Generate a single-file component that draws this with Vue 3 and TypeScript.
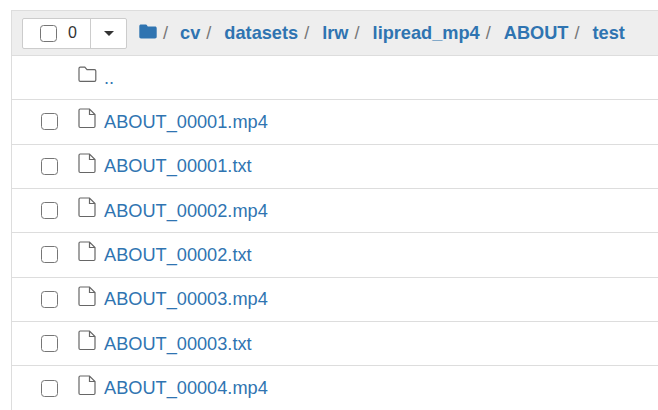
<script setup lang="ts">
const crumbs = ['cv', 'datasets', 'lrw', 'lipread_mp4', 'ABOUT']
const files = [
  'ABOUT_00001.mp4',
  'ABOUT_00001.txt',
  'ABOUT_00002.mp4',
  'ABOUT_00002.txt',
  'ABOUT_00003.mp4',
  'ABOUT_00003.txt',
  'ABOUT_00004.mp4',
]
</script>

<template>
  <div class="page">
    <div class="listing">
      <div class="toolbar">
        <div class="select-group">
          <div class="select-main">
            <span class="check"></span>
            <span class="count">0</span>
          </div>
          <div class="select-caret"><span class="caret"></span></div>
        </div>
        <div class="crumbs">
          <svg class="home" width="18" height="15" viewBox="0 0 18 15">
            <path d="M2 .5h4.500c.8 0 1.200.3 1.600 1L8.800 2.500H16c1 0 1.700.7 1.700 1.700V12.800c0 1-.7 1.700-1.700 1.700H2C1 14.500.3 13.800.3 12.800V2.200C.3 1.200 1 .5 2 .5z" fill="#2f74b1" />
          </svg>
          <span class="sep first">/</span>
          <template v-for="c in crumbs" :key="c">
            <a class="crumb">{{ c }}</a>
            <span class="sep">/</span>
          </template>
          <a class="crumb">test</a>
        </div>
      </div>

      <div class="row">
        <span class="cell-check"></span>
        <svg class="icon" width="19" height="17" viewBox="0 0 19 17" fill="none">
          <path d="M1 14V2.500C1 1.700 1.500 1.200 2.300 1.200h4.500L9 3.700h7.500c.8 0 1.300.5 1.300 1.300v9c0 .8-.5 1.300-1.300 1.300H2.300C1.500 15.300 1 14.800 1 14z" stroke="#666" stroke-width="1.200" />
        </svg>
        <a class="name">..</a>
      </div>
      <div v-for="f in files" :key="f" class="row">
        <span class="cell-check"><span class="check"></span></span>
        <svg class="icon" width="19" height="21" viewBox="0 0 19 21" fill="none">
          <path d="M1 2.200C1 1.500 1.500 1 2.200 1H11.500L17 6.500V18.300C17 19 16.500 19.500 15.800 19.500H2.200C1.500 19.500 1 19 1 18.300zM11.500 1V6.500H17" stroke="#666" stroke-width="1.200" />
        </svg>
        <a class="name">{{ f }}</a>
      </div>
    </div>
  </div>
</template>

<style>
html,
body {
  margin: 0;
  background: #fff;
  overflow: hidden;
}
</style>

<style scoped>
.page {
  height: 410px;
  padding: 10px 0 0 11px;
  box-sizing: border-box;
  overflow: hidden;
  font-family: "Liberation Sans", Arial, sans-serif;
  color: #333;
}

.listing {
  border-top: 1px solid #ddd;
  border-left: 1px solid #ddd;
}

.toolbar {
  display: flex;
  align-items: center;
  height: 44px;
  padding-left: 10px;
  background: #eee;
  border-bottom: 1px solid #ddd;
}

.select-group {
  display: flex;
  height: 31px;
  background: #fff;
  border: 1px solid #ccc;
  border-radius: 2px;
  box-sizing: border-box;
}

.select-main {
  display: flex;
  align-items: center;
  width: 68px;
  padding-left: 17px;
  box-sizing: border-box;
  border-right: 1px solid #ccc;
}

.count {
  margin-left: 11px;
  font-size: 16px;
}

.select-caret {
  display: flex;
  align-items: center;
  justify-content: center;
  width: 35px;
}

.caret {
  border-top: 5.500px solid #333;
  border-left: 5.500px solid transparent;
  border-right: 5.500px solid transparent;
}

.check {
  display: block;
  width: 17px;
  height: 17px;
  box-sizing: border-box;
  border: 1.500px solid #767676;
  border-radius: 3.500px;
  background: #fff;
}

.crumbs {
  display: flex;
  align-items: center;
  margin-left: 12px;
  font-size: 18.200px;
  font-weight: 700;
}

.home {
  margin: -3px 6px 0 0;
}

.sep {
  margin: 0 13px 0 6px;
  font-weight: 400;
  color: #777;
}

.sep.first {
  margin: 0 12px 0 0;
}

.crumb {
  color: #2f74b1;
}

.row {
  display: flex;
  align-items: center;
  height: 44.330px;
  box-sizing: border-box;
  border-bottom: 1px solid #ddd;
  font-size: 18.200px;
}

.row:last-child {
  border-bottom: none;
}

.cell-check {
  display: block;
  width: 29px;
  margin-left: 29px;
  flex: none;
}

.icon {
  flex: none;
  margin: -6px 7px 0 8px;
}

.name {
  padding-top: 0.800px;
  color: #2f74b1;
}
</style>
